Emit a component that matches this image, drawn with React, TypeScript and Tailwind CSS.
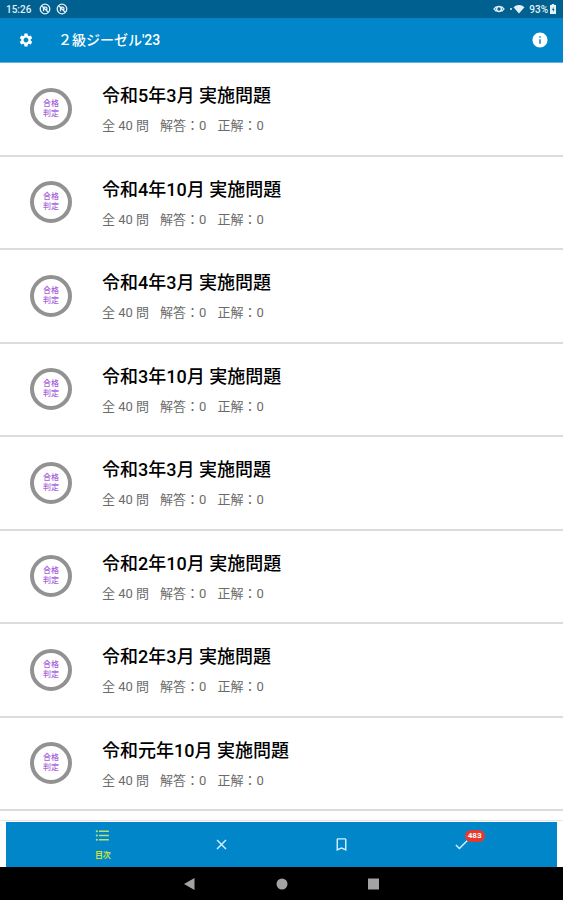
import {
  MdBookmarkBorder,
  MdCheck,
  MdClose,
  MdFormatListBulleted,
  MdInfo,
  MdSettings,
} from "react-icons/md";

const exams = [
  "令和5年3月 実施問題",
  "令和4年10月 実施問題",
  "令和4年3月 実施問題",
  "令和3年10月 実施問題",
  "令和3年3月 実施問題",
  "令和2年10月 実施問題",
  "令和2年3月 実施問題",
  "令和元年10月 実施問題",
];

function NotificationIcon() {
  return (
    <svg viewBox="0 0 12 12" className="size-3" fill="none" stroke="currentColor">
      <circle cx="6" cy="6" r="4.8" strokeWidth="1.3" />
      <path d="M3 3l6 6M4.5 8.200V4.200h2a1.500 1.500 0 0 1 0 3" strokeWidth="1.300" />
    </svg>
  );
}

function StatusBar() {
  return (
    <div className="flex h-[18px] items-center bg-[#00608f] px-1.5 text-[10px] font-medium text-[#e3f1f8]">
      <span>15:26</span>
      <span className="ml-2 flex gap-[5px]">
        <NotificationIcon />
        <NotificationIcon />
      </span>
      <span className="ml-auto flex items-center gap-1">
        <svg viewBox="0 0 12 10" className="h-2.5 w-3" fill="none" stroke="currentColor">
          <path d="M3.500 2.500L1 5l2.500 2.500M8.500 2.500L11 5l-2.500 2.500" strokeWidth="1.200" />
          <circle cx="6" cy="5" r="2.400" strokeWidth="1.500" />
        </svg>
        <svg viewBox="0 0 16 10" className="h-2.5 w-4" fill="currentColor">
          <circle cx="2" cy="5" r="1" />
          <path d="M4.500 3.200a8 8 0 0 1 11 0L10 9.600z" />
        </svg>
        <span className="text-[10px]">93%</span>
      </span>
      <svg viewBox="0 0 8 12" className="ml-px h-3 w-2" fill="currentColor">
        <path d="M2.800 1h2.400v1H7v9H1V2h1.800z" />
        <path d="M4.500 4L3 7h1v2l1.500-3h-1z" fill="#00608f" />
      </svg>
    </div>
  );
}

function Header() {
  return (
    <header className="flex h-[45px] items-center border-b border-[#5fb3de] bg-[#0086c9] px-[18px] text-white">
      <button type="button" aria-label="設定">
        <MdSettings size={16} />
      </button>
      <h1 className="ml-6 text-sm font-medium">２級ジーゼル'23</h1>
      <button type="button" aria-label="情報" className="ml-auto -mr-1">
        <MdInfo size={18} />
      </button>
    </header>
  );
}

function ExamRow({ title }: { title: string }) {
  return (
    <li className="flex items-center border-b-2 border-[#dcdcdc] pl-[30px]">
      <button
        type="button"
        className="flex size-[42px] shrink-0 items-center justify-center rounded-full border-4 border-[#929292] text-[8px] leading-[10px] font-medium text-[#a95fdc]"
      >
        合格
        <br />
        判定
      </button>
      <div className="ml-[30px] flex flex-col gap-2 pt-[3px]">
        <h2 className="text-lg leading-6 font-medium text-black">{title}</h2>
        <p className="flex gap-[11px] text-[13px] leading-5 text-[#6b6b6b]">
          <span>全 40 問</span>
          <span>解答：0</span>
          <span>正解：0</span>
        </p>
      </div>
    </li>
  );
}

function TabBar() {
  return (
    <div className="border-t border-white px-1.5">
      <nav className="grid h-[45px] grid-cols-4 bg-[#0086c9] px-9 text-[#d5f2ff]">
        <button
          type="button"
          className="flex flex-col items-center justify-center gap-1.5 pl-0.5 text-[#b9e070]"
        >
          <MdFormatListBulleted size={17} />
          <span className="text-[8px] leading-3 font-bold text-[#cfe03c]">目次</span>
        </button>
        <button type="button" aria-label="不正解" className="flex items-center justify-center">
          <MdClose size={17} />
        </button>
        <button type="button" aria-label="ブックマーク" className="flex items-center justify-center">
          <MdBookmarkBorder size={17} />
        </button>
        <button type="button" aria-label="チェック" className="flex items-center justify-center">
          <span className="relative">
            <MdCheck size={17} />
            <span className="absolute -top-1.5 left-3 flex h-3 w-5 items-center justify-center rounded-full bg-[#e53a2e] text-[8px] font-bold text-white">
              483
            </span>
          </span>
        </button>
      </nav>
    </div>
  );
}

function SystemNav() {
  return (
    <div className="flex h-[33px] items-center justify-center gap-20 bg-black text-[#a3a3a3]">
      <button type="button" aria-label="戻る">
        <svg viewBox="0 0 12 12" className="size-3" fill="currentColor">
          <path d="M10.500 0v12L0 6z" />
        </svg>
      </button>
      <button type="button" aria-label="ホーム">
        <svg viewBox="0 0 12 12" className="size-3" fill="currentColor">
          <circle cx="6" cy="6" r="5.500" />
        </svg>
      </button>
      <button type="button" aria-label="履歴">
        <svg viewBox="0 0 12 12" className="size-3" fill="currentColor">
          <path d="M0 .500h11v11H0z" />
        </svg>
      </button>
    </div>
  );
}

export default function App() {
  return (
    <div className="flex min-h-screen flex-col bg-white font-['Roboto','Noto_Sans_CJK_JP',sans-serif]">
      <StatusBar />
      <Header />
      <ul className="grid flex-1 auto-rows-fr">
        {exams.map((title) => (
          <ExamRow key={title} title={title} />
        ))}
      </ul>
      <div className="mt-[9px]">
        <div className="h-px bg-[#e8e8e8]" />
        <TabBar />
      </div>
      <SystemNav />
    </div>
  );
}
